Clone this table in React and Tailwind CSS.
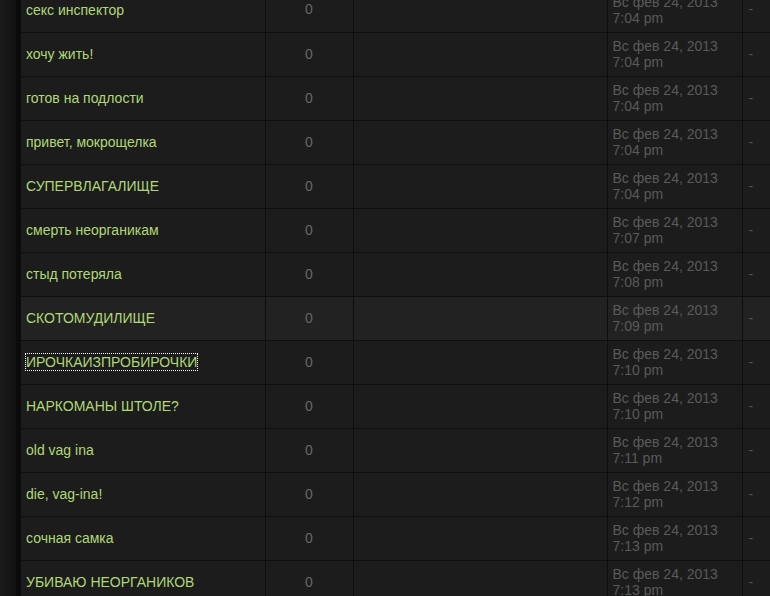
import React from 'react';

const topics = [
  ['секс инспектор', '7:04 pm'],
  ['хочу жить!', '7:04 pm'],
  ['готов на подлости', '7:04 pm'],
  ['привет, мокрощелка', '7:04 pm'],
  ['СУПЕРВЛАГАЛИЩЕ', '7:04 pm'],
  ['смерть неорганикам', '7:07 pm'],
  ['стыд потеряла', '7:08 pm'],
  ['СКОТОМУДИЛИЩЕ', '7:09 pm'],
  ['ИРОЧКАИЗПРОБИРОЧКИ', '7:10 pm'],
  ['НАРКОМАНЫ ШТОЛЕ?', '7:10 pm'],
  ['old vag ina', '7:11 pm'],
  ['die, vag-ina!', '7:12 pm'],
  ['сочная самка', '7:13 pm'],
  ['УБИВАЮ НЕОРГАНИКОВ', '7:13 pm'],
];

export default function App() {
  return (
    <div
      className="w-[770px] h-[596px] overflow-hidden flex bg-[#141414]"
      style={{ fontFamily: '"Liberation Sans", Arial, sans-serif' }}
    >
      {/* left page gutter */}
      <div className="w-[16px] shrink-0 bg-gradient-to-r from-[#1a1a1a] to-[#121212]" />
      <div className="w-[5px] shrink-0 bg-[#0b0b0b]" />

      <div className="flex-1 -mt-[12px]">
        <table className="table-fixed border-collapse w-[760px] text-[14px]">
          <colgroup>
            <col className="w-[244px]" />
            <col className="w-[88px]" />
            <col className="w-[254px]" />
            <col className="w-[135px]" />
            <col />
          </colgroup>
          <tbody>
            {topics.map(([title, time], i) => {
              const hover = i === 7;
              return (
                <tr
                  key={i}
                  className={`h-[44px] ${hover ? 'bg-[#222222]' : 'bg-[#1c1c1c]'}`}
                >
                  <td className="border-b border-r border-[#0e0e0e] pl-[5px] leading-[16px]">
                    <a
                      href="#"
                      className={`text-[#b0d877] ${
                        i === 8 ? 'outline outline-1 outline-dotted outline-white' : ''
                      }`}
                    >
                      {title}
                    </a>
                  </td>
                  <td className="border-b border-r border-[#0e0e0e] text-center text-[#666666]">
                    0
                  </td>
                  <td className="border-b border-r border-[#0e0e0e]" />
                  <td className="border-b border-r border-[#0e0e0e] pl-[5px] text-[#5a5a5a] leading-[16px]">
                    Вс фев 24, 2013
                    <br />
                    {time}
                  </td>
                  <td className="border-b border-[#0e0e0e] pl-[6px] text-[#555555]">
                    -
                  </td>
                </tr>
              );
            })}
          </tbody>
        </table>
      </div>
    </div>
  );
}
